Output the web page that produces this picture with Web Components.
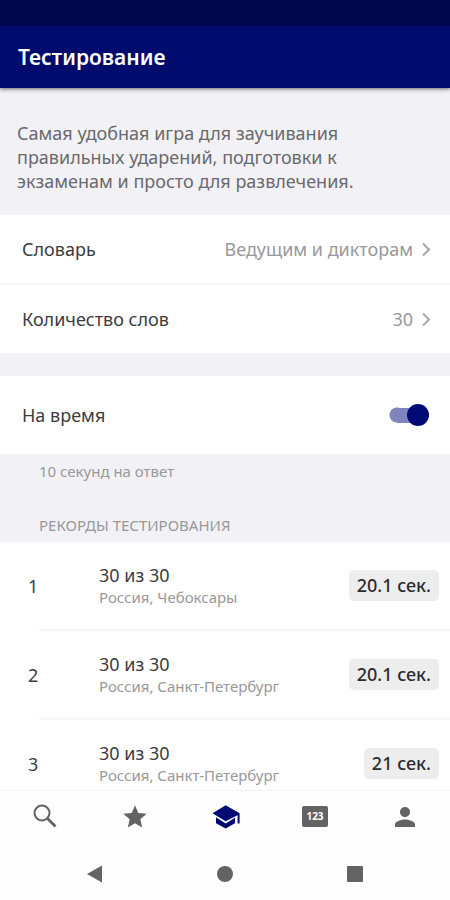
<!DOCTYPE html>
<html lang="ru">
<head>
<meta charset="utf-8">
<meta name="viewport" content="width=device-width, initial-scale=1">
<title>Тестирование</title>
<style>
  body { margin: 0; font-family: "Noto Sans", "Open Sans", sans-serif; color: #3c3c3e; background: #f2f1f6; }
</style>
</head>
<body>
<quiz-screen>
  <app-header slot="header">Тестирование</app-header>
  <intro-text>Самая удобная игра для заучивания правильных ударений, подготовки к экзаменам и просто для развлечения.</intro-text>
  <settings-group>
    <setting-row>Словарь<span slot="value">Ведущим и дикторам</span></setting-row>
    <setting-row>Количество слов<span slot="value">30</span></setting-row>
  </settings-group>
  <switch-row>На время<span slot="hint">10 секунд на ответ</span></switch-row>
  <record-list>
    <span slot="title">РЕКОРДЫ ТЕСТИРОВАНИЯ</span>
    <record-row><span slot="place">1</span>30 из 30<span slot="city">Россия, Чебоксары</span><span slot="time">20.1 сек.</span></record-row>
    <record-row><span slot="place">2</span>30 из 30<span slot="city">Россия, Санкт-Петербург</span><span slot="time">20.1 сек.</span></record-row>
    <record-row><span slot="place">3</span>30 из 30<span slot="city">Россия, Санкт-Петербург</span><span slot="time">21 сек.</span></record-row>
  </record-list>
  <tab-bar slot="footer"></tab-bar>
  <system-bar slot="footer"></system-bar>
</quiz-screen>

<script>
const define = (name, html) => {
  const template = document.createElement('template');
  template.innerHTML = html;
  customElements.define(name, class extends HTMLElement {
    constructor() {
      super();
      this.attachShadow({ mode: 'open' }).append(template.content.cloneNode(true));
    }
  });
};

define('quiz-screen', `
  <style>
    :host { display: flex; flex-direction: column; height: 100vh; }
    main { flex: 1; min-height: 0; overflow-y: auto; scrollbar-width: none; }
    header { position: relative; }
    footer { background: #fefefe; }
  </style>
  <header><slot name="header"></slot></header>
  <main><slot></slot></main>
  <footer><slot name="footer"></slot></footer>`);

define('app-header', `
  <style>
    :host { display: block; background: #000b6e; color: #fff; border-top: 26px solid #00064b; box-shadow: 0 1px 4px rgba(0,0,0,.6); }
    h1 { margin: 0; padding: 0 18px; font-size: 21px; line-height: 62px; font-weight: 600; }
  </style>
  <h1><slot></slot></h1>`);

define('intro-text', `
  <style>
    :host { display: block; padding: 33px 72px 22px 17px; color: #69696c; }
    p { margin: 0; font-size: 18px; line-height: 24px; }
  </style>
  <p><slot></slot></p>`);

define('settings-group', `
  <style>
    :host { display: flex; flex-direction: column; gap: 2px; margin-bottom: 23px; background: #f7f7f8; }
  </style>
  <slot></slot>`);

define('setting-row', `
  <style>
    :host { display: block; background: #fff; }
    button { display: flex; align-items: center; width: 100%; height: 68px; padding: 0 18px 0 22px; border: 0; background: none; font: inherit; font-size: 18px; color: inherit; text-align: left; }
    .label { flex: 1; }
    .value { color: #98989a; }
    svg { margin-left: 7px; flex: none; }
  </style>
  <button type="button">
    <span class="label"><slot></slot></span>
    <span class="value"><slot name="value"></slot></span>
    <svg width="12" height="16" viewBox="0 0 12 16" fill="none" stroke="#a6a6a8" stroke-width="2" aria-hidden="true"><path d="M3 2.500 9 8.500 3 14.500"/></svg>
  </button>`);

define('switch-row', `
  <style>
    :host { display: block; }
    label { display: flex; align-items: center; justify-content: space-between; height: 78px; padding: 0 21px 0 22px; background: #fff; font-size: 18px; }
    input { appearance: none; display: flex; align-items: center; width: 40px; height: 22px; margin: 0;
      background: radial-gradient(circle at 8px 50%, #b5b5b8 7px, transparent 8px), linear-gradient(#b5b5b8, #b5b5b8) 8px 50% / 24px 15px no-repeat; }
    input::before { content: ""; width: 22px; height: 22px; border-radius: 50%; background: #f5f5f5; }
    input:checked { justify-content: flex-end;
      background: radial-gradient(circle at 8px 50%, #8084bd 7px, transparent 8px), linear-gradient(#8084bd, #8084bd) 8px 50% / 24px 15px no-repeat; }
    input:checked::before { background: #000a75; }
    p { margin: 0; padding: 6px 39px; font-size: 15px; line-height: 22px; color: #98989b; }
  </style>
  <label><slot></slot><input type="checkbox" role="switch" checked></label>
  <p><slot name="hint"></slot></p>`);

define('record-list', `
  <style>
    :host { display: block; }
    h2 { margin: 0; padding: 26px 39px 6px; font-size: 15px; line-height: 22px; font-weight: 400; color: #98989b; }
    div { background: #fff; }
  </style>
  <h2><slot name="title"></slot></h2>
  <div role="list"><slot></slot></div>`);

define('record-row', `
  <style>
    :host { display: block; }
    .row { display: grid; grid-template-columns: 60px 1fr auto; align-items: center; height: 87px; padding: 0 11px 0 28px; }
    .line { height: 2px; margin-left: 39px; background: #f6f6f7; }
    .place { font-size: 18px; }
    .info { padding-left: 11px; }
    .score { font-size: 18px; line-height: 22px; }
    .city { font-size: 15px; line-height: 22px; color: #98989b; }
    .time { padding: 0 8px; border-radius: 5px; background: #ededee; font-size: 18px; line-height: 31px; font-weight: 500; color: #2c2c2e; }
  </style>
  <div class="row" role="listitem">
    <span class="place"><slot name="place"></slot></span>
    <div class="info"><div class="score"><slot></slot></div><div class="city"><slot name="city"></slot></div></div>
    <span class="time"><slot name="time"></slot></span>
  </div>
  <div class="line"></div>`);

define('tab-bar', `
  <style>
    :host { display: block; border-top: 1px solid #f3f3f4; }
    nav { display: grid; grid-template-columns: repeat(5, 1fr); height: 51px; }
    button { display: grid; place-items: center; padding: 0; border: 0; background: none; color: #636364; }
    button[aria-current] { color: #000a75; }
    svg { fill: currentColor; }
    text { font: 700 10px "Noto Sans", sans-serif; fill: #fff; }
  </style>
  <nav>
    <button type="button" aria-label="Поиск"><svg width="30" height="30" viewBox="0 0 30 30"><g fill="none" stroke="currentColor"><circle cx="12" cy="11" r="7.500" stroke-width="2"/><path d="m17.500 16.500 8 8" stroke-width="2.800"/></g></svg></button>
    <button type="button" aria-label="Избранное"><svg width="28" height="28" viewBox="0 0 24 24"><path d="M12 17.27 18.18 21l-1.640-7.030L22 9.240l-7.190-.610L12 2 9.190 8.630 2 9.240l5.460 4.730L5.820 21z"/></svg></button>
    <button type="button" aria-label="Тестирование" aria-current="page"><svg width="30" height="30" viewBox="0 0 30 30"><path d="M2.500 11.200 15.700 3.300 29.600 11.200V21.500H27.600V13.200L15.700 19.300ZM6 15.200 15.700 21.500 25 15.700V21.300L15.700 26.600 6 21.300Z"/></svg></button>
    <button type="button" aria-label="Числа"><svg width="30" height="30" viewBox="0 0 30 30"><rect x="2" y="4" width="26" height="21" rx="2"/><text x="15" y="18" text-anchor="middle">123</text></svg></button>
    <button type="button" aria-label="Профиль"><svg width="30" height="30" viewBox="0 0 24 24"><path d="M12 12c2.210 0 4-1.790 4-4s-1.790-4-4-4-4 1.790-4 4 1.790 4 4 4zm0 2c-2.670 0-8 1.340-8 4v2h16v-2c0-2.660-5.330-4-8-4z"/></svg></button>
  </nav>`);

define('system-bar', `
  <style>
    :host { display: block; }
    nav { display: flex; justify-content: space-between; height: 58px; padding: 6px 82px 0; box-sizing: border-box; }
    button { display: grid; place-items: center; width: 26px; padding: 0; border: 0; background: none; color: #636364; }
    svg { fill: currentColor; }
  </style>
  <nav>
    <button type="button" aria-label="Назад"><svg width="20" height="20" viewBox="0 0 20 20"><path d="M2 10 17 1.500V18.500Z"/></svg></button>
    <button type="button" aria-label="Домой"><svg width="20" height="20" viewBox="0 0 20 20"><circle cx="10" cy="10" r="8"/></svg></button>
    <button type="button" aria-label="Недавние"><svg width="20" height="20" viewBox="0 0 20 20"><rect x="2" y="2" width="16" height="16" rx="1"/></svg></button>
  </nav>`);
</script>
</body>
</html>
